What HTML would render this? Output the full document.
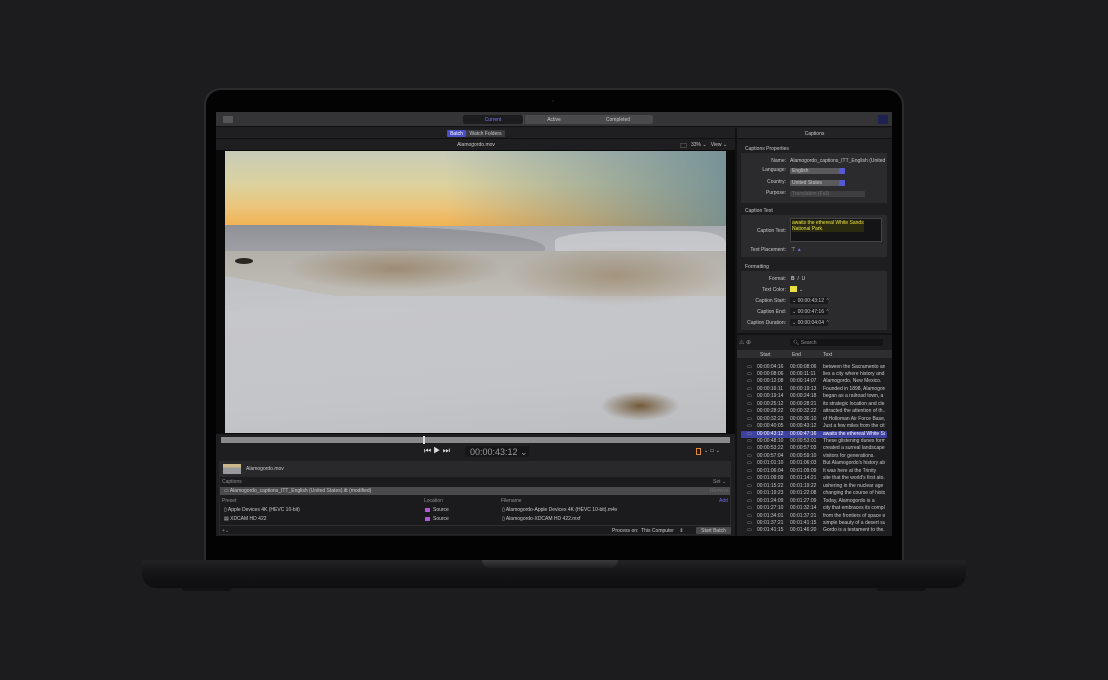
<!DOCTYPE html>
<html><head><meta charset="utf-8"><style>
*{margin:0;padding:0;box-sizing:border-box}
body{width:1108px;height:680px;background:#1c1c1e;position:relative;overflow:hidden;font-family:"Liberation Sans",sans-serif}
div{position:absolute}
.t{font-size:5px;color:#c8c8ca;white-space:nowrap;line-height:6px}
.r{text-align:right}
.g{color:#8e8e93}
</style></head><body>
<div style="left:204px;top:88px;width:700px;height:474px;border-radius:17px 17px 4px 4px;background:#2c2c2e"></div>
<div style="left:206px;top:90px;width:696px;height:472px;border-radius:15px 15px 2px 2px;background:#030303"></div>
<div style="left:552px;top:100px;width:2px;height:2px;border-radius:1px;background:#1a1a1a"></div>
<div style="left:142px;top:560px;width:824px;height:28px;border-radius:3px 3px 14px 14px;background:linear-gradient(#232325,#161618 40%,#0e0e10)"></div>
<div style="left:482px;top:560px;width:136px;height:8px;border-radius:0 0 8px 8px;background:linear-gradient(#3a3a3c,#1e1e20)"></div>
<div style="left:182px;top:587px;width:50px;height:4px;border-radius:0 0 4px 4px;background:#111"></div>
<div style="left:876px;top:587px;width:50px;height:4px;border-radius:0 0 4px 4px;background:#111"></div>

<div style="left:216px;top:112px;width:676px;height:424px;background:#1e1e20;overflow:hidden">
 <div style="left:0;top:0;width:676px;height:15px;background:#343436;border-bottom:1px solid #111"></div>
 <div style="left:7px;top:4px;width:10px;height:7px;background:#555;border-radius:1px"></div>
 <div style="left:247px;top:3px;width:190px;height:9px;background:#4a4a4c;border-radius:2px"></div>
 <div style="left:247px;top:3px;width:60px;height:9px;background:#1c1c1e;border-radius:2px"></div>
 <div class="t" style="left:247px;top:4.5px;width:60px;text-align:center;color:#7a7cf0">Current</div>
 <div style="left:308px;top:3px;width:1px;height:9px;background:#333"></div>
 <div class="t" style="left:308px;top:4.5px;width:60px;text-align:center">Active</div>
 <div class="t" style="left:370px;top:4.5px;width:64px;text-align:center">Completed</div>
 <div style="left:662px;top:3px;width:10px;height:9px;background:#1e2250;border-radius:1px"></div>
 <div style="left:0;top:16px;width:519px;height:11px;background:#1f1f21;border-bottom:1px solid #111"></div>
 <div style="left:231px;top:18px;width:19px;height:7px;background:#4a4ec8;border-radius:1px"></div>
 <div class="t" style="left:231px;top:18.5px;width:19px;text-align:center;color:#fff">Batch</div>
 <div style="left:250px;top:18px;width:39px;height:7px;background:#3a3a3c;border-radius:1px"></div>
 <div class="t" style="left:250px;top:18.5px;width:39px;text-align:center">Watch Folders</div>
 <div class="t" style="left:200px;top:30px;width:120px;text-align:center">Alamogordo.mov</div>
 <div style="left:464px;top:31px;width:7px;height:5px;border:1px solid #444"></div>
 <div class="t" style="left:475px;top:30px">33% ⌄&nbsp;&nbsp; View ⌄</div>
 <div style="left:0;top:38px;width:519px;height:284px;background:#0a0a0a"></div>
 <div style="left:9px;top:39px;width:501px;height:282px;overflow:hidden;background:linear-gradient(180deg,#c6cbb8 0%,#dcd29e 12%,#ebc47a 20%,#f2b456 26%,#f3ac48 28%,#c5c6ca 29%,#c5c6ca 100%)">
  <div style="left:220px;top:0;width:281px;height:80px;background:linear-gradient(90deg,rgba(130,155,160,0),rgba(110,140,148,.9))"></div>
  <div style="left:0;top:75px;width:501px;height:50px;background:linear-gradient(180deg,#a9abb1,#b9babf)"></div>
  <div style="left:0;top:74px;width:320px;height:38px;background:linear-gradient(180deg,#8f9197,#a4a6ac);border-radius:0 70% 0 0/0 60% 0 0"></div>
  <div style="left:330px;top:80px;width:171px;height:20px;background:linear-gradient(180deg,#c2c4c8,#c8c9cc);border-radius:40% 20% 0 0/50% 60% 0 0"></div>
  <div style="left:0;top:100px;width:501px;height:45px;background:linear-gradient(180deg,#b3b0aa,#c0bdb6)"></div>
  <div style="left:60px;top:95px;width:220px;height:45px;background:radial-gradient(ellipse,rgba(135,105,65,.55),rgba(135,105,65,0) 70%)"></div>
  <div style="left:280px;top:95px;width:221px;height:60px;background:radial-gradient(ellipse,rgba(135,105,65,.45),rgba(135,105,65,0) 70%)"></div>
  <div style="left:0;top:125px;width:260px;height:157px;background:linear-gradient(175deg,#c0c1c5,#c9cace 40%,#c3c4c8);clip-path:polygon(0 0,100% 30%,100% 100%,0 100%)"></div>
  <div style="left:0;top:160px;width:501px;height:122px;background:linear-gradient(175deg,#c6c7cb,#c4c5c9 60%,#bcbdc1)"></div>
  <div style="left:10px;top:107px;width:18px;height:6px;background:#2a2622;border-radius:50%"></div>
  <div style="left:375px;top:240px;width:80px;height:30px;background:radial-gradient(ellipse,rgba(110,85,50,.95),rgba(110,85,50,0) 70%)"></div>
 </div>
 <div style="left:5px;top:325px;width:509px;height:6px;background:#8a8a8c"></div>
 <div style="left:207px;top:324px;width:2px;height:8px;background:#ddd"></div>
 <div class="t" style="left:208px;top:336px;font-size:8px;color:#ddd">⏮ ▶ ⏭</div>
 <div style="left:249px;top:334px;width:64px;height:11px;background:#161618"></div>
 <div class="t" style="left:254px;top:335px;font-size:9px;line-height:10px;color:#9a9a9c">00:00:43:12 ⌄</div>
 <div style="left:480px;top:336px;width:5px;height:7px;border:1px solid #e08a3a"></div>
 <div class="t" style="left:488px;top:336px">⌄ ▭ ⌄</div>
 <div style="left:3px;top:349px;width:512px;height:74px;background:#1b1b1d;border:1px solid #2a2a2c"></div>
 <div style="left:4px;top:350px;width:510px;height:15px;background:#29292b"></div>
 <div style="left:7px;top:352px;width:18px;height:10px;background:linear-gradient(#c8b88a 0 35%,#9a9a9e 35%)"></div>
 <div class="t" style="left:30px;top:354px">Alamogordo.mov</div>
 <div class="t g" style="left:6px;top:367px">Captions</div>
 <div class="t g" style="left:497px;top:367px">Set ⌄</div>
 <div style="left:4px;top:375px;width:510px;height:8px;background:#4a4a4c"></div>
 <div class="t" style="left:8px;top:376px">▭ Alamogordo_captions_ITT_English (United States).itt (modified)</div>
 <div class="t" style="left:494px;top:376px;color:#6a6a6c">Remove</div>
 <div class="t g" style="left:6px;top:386px">Preset</div>
 <div class="t g" style="left:208px;top:386px">Location</div>
 <div class="t g" style="left:285px;top:386px">Filename</div>
 <div class="t" style="left:503px;top:386px;color:#6a6cf0">Add</div>
 <div class="t" style="left:8px;top:395px">▯ Apple Devices 4K (HEVC 10-bit)</div>
 <div style="left:209px;top:396px;width:5px;height:4px;background:#b05ad8"></div>
 <div class="t" style="left:217px;top:395px">Source</div>
 <div class="t" style="left:286px;top:395px">▯ Alamogordo-Apple Devices 4K (HEVC 10-bit).m4v</div>
 <div class="t" style="left:8px;top:404px">▤ XDCAM HD 422</div>
 <div style="left:209px;top:405px;width:5px;height:4px;background:#b05ad8"></div>
 <div class="t" style="left:217px;top:404px">Source</div>
 <div class="t" style="left:286px;top:404px">▯ Alamogordo-XDCAM HD 422.mxf</div>
 <div style="left:4px;top:413px;width:510px;height:1px;background:#2e2e30"></div>
 <div class="t g" style="left:6px;top:416px">+⌄</div>
 <div class="t" style="left:396px;top:416px">Process on:&nbsp; This Computer&nbsp;&nbsp;&nbsp; ⇕</div>
 <div style="left:480px;top:415px;width:35px;height:7px;background:#4a4a4c;border-radius:1px"></div>
 <div class="t" style="left:480px;top:415.5px;width:35px;text-align:center">Start Batch</div>

 <div style="left:519px;top:16px;width:2px;height:408px;background:#111"></div>
 <div style="left:521px;top:16px;width:155px;height:11px;background:#232325;border-bottom:1px solid #111"></div>
 <div class="t" style="left:521px;top:18.5px;width:155px;text-align:center">Captions</div>
 <div class="t" style="left:529px;top:34px">Captions Properties</div>
 <div style="left:525px;top:41px;width:146px;height:50px;background:#2b2b2d"></div>
 <div class="t r" style="left:520px;top:45.5px;width:50px">Name:</div>
 <div class="t" style="left:574px;top:45.5px">Alamogordo_captions_ITT_English (United</div>
 <div class="t r" style="left:520px;top:55px;width:50px">Language:</div>
 <div style="left:574px;top:56px;width:55px;height:6px;background:#5a5a5c;border-radius:1px"></div>
 <div style="left:623px;top:56px;width:6px;height:6px;background:#5558d8;border-radius:1px"></div>
 <div class="t" style="left:576px;top:56px">English</div>
 <div class="t r" style="left:520px;top:66.5px;width:50px">Country:</div>
 <div style="left:574px;top:67.5px;width:55px;height:6px;background:#5a5a5c;border-radius:1px"></div>
 <div style="left:623px;top:67.5px;width:6px;height:6px;background:#5558d8;border-radius:1px"></div>
 <div class="t" style="left:576px;top:67.5px">United States</div>
 <div class="t r" style="left:520px;top:77.5px;width:50px">Purpose:</div>
 <div style="left:574px;top:78.5px;width:75px;height:6px;background:#3e3e40;border-radius:1px"></div>
 <div class="t" style="left:576px;top:78.5px;color:#6a6a6c">Translation (Full)</div>
 <div class="t" style="left:529px;top:96px">Caption Text</div>
 <div style="left:525px;top:103px;width:146px;height:42px;background:#2b2b2d"></div>
 <div style="left:574px;top:106px;width:92px;height:24px;background:#141416;border:1px solid #444"></div>
 <div class="t" style="left:576px;top:108px;color:#e8e040;line-height:6px;background:#2a2a10">awaits the ethereal White Sands<br>National Park.</div>
 <div class="t r" style="left:520px;top:116px;width:50px">Caption Text:</div>
 <div class="t r" style="left:520px;top:134.5px;width:50px">Text Placement:</div>
 <div class="t" style="left:575px;top:134.5px">⊤ <span style="color:#6a6cf0">▲</span></div>
 <div class="t" style="left:529px;top:152px">Formatting</div>
 <div style="left:525px;top:159px;width:146px;height:59px;background:#2b2b2d"></div>
 <div class="t r" style="left:520px;top:163.5px;width:50px">Format:</div>
 <div class="t" style="left:575px;top:163.5px"><b>B</b>&nbsp; <i>I</i>&nbsp; U</div>
 <div class="t r" style="left:520px;top:174.5px;width:50px">Text Color:</div>
 <div style="left:574px;top:173.5px;width:7px;height:6px;background:#e8e040"></div>
 <div class="t" style="left:583px;top:174.5px">⌄</div>
 <div class="t r" style="left:520px;top:185.5px;width:50px">Caption Start:</div>
 <div style="left:574px;top:184.5px;width:38px;height:7px;background:#1a1a1c;border-radius:1px"></div>
 <div class="t" style="left:576px;top:185.5px">⌄ 00:00:43:12 ⌃</div>
 <div class="t r" style="left:520px;top:196.5px;width:50px">Caption End:</div>
 <div style="left:574px;top:195.5px;width:38px;height:7px;background:#1a1a1c;border-radius:1px"></div>
 <div class="t" style="left:576px;top:196.5px">⌄ 00:00:47:16 ⌃</div>
 <div class="t r" style="left:520px;top:207.5px;width:50px">Caption Duration:</div>
 <div style="left:574px;top:206.5px;width:38px;height:7px;background:#1a1a1c;border-radius:1px"></div>
 <div class="t" style="left:576px;top:207.5px">⌄ 00:00:04:04 ⌃</div>
 <div style="left:521px;top:221px;width:155px;height:2px;background:#111"></div>
 <div class="t g" style="left:523px;top:228px;font-size:6px">⚠ ⊕</div>
 <div style="left:574px;top:227px;width:93px;height:7px;background:#141416;border-radius:1px"></div>
 <div class="t g" style="left:577px;top:228px">🔍︎ Search</div>
 <div style="left:521px;top:238px;width:155px;height:8px;background:#2e2e30"></div>
 <div class="t" style="left:544px;top:239.5px">Start</div>
 <div class="t" style="left:576px;top:239.5px">End</div>
 <div class="t" style="left:607px;top:239.5px">Text</div>
 <div style="left:525px;top:318.5px;width:146px;height:7px;background:#3d42a0;border-radius:1px"></div>
</div>
<div style="left:0;top:0" id="list"></div>
<script>
var d=[["00:00:04:16","00:00:08:06","between the Sacramento an..."],["00:00:08:06","00:00:11:11","lies a city where history and..."],["00:00:12:08","00:00:14:07","Alamogordo, New Mexico."],["00:00:16:11","00:00:19:13","Founded in 1898, Alamogordo"],["00:00:19:14","00:00:24:18","began as a railroad town, a v..."],["00:00:25:12","00:00:28:21","its strategic location and cle..."],["00:00:28:22","00:00:32:22","attracted the attention of th..."],["00:00:32:23","00:00:36:10","of Holloman Air Force Base,..."],["00:00:40:05","00:00:43:12","Just a few miles from the cit..."],["00:00:43:12","00:00:47:16","awaits the ethereal White Sa..."],["00:00:48:10","00:00:53:01","These glistening dunes form..."],["00:00:53:22","00:00:57:03","created a surreal landscape..."],["00:00:57:04","00:00:59:10","visitors for generations."],["00:01:01:10","00:01:06:03","But Alamogordo's history als..."],["00:01:06:04","00:01:09:09","It was here at the Trinity"],["00:01:09:09","00:01:14:21","site that the world's first ato..."],["00:01:15:22","00:01:19:22","ushering in the nuclear age a..."],["00:01:19:23","00:01:22:08","changing the course of histo..."],["00:01:24:09","00:01:27:09","Today, Alamogordo is a"],["00:01:27:10","00:01:32:14","city that embraces its compl..."],["00:01:34:01","00:01:37:21","from the frontiers of space e..."],["00:01:37:21","00:01:41:15","simple beauty of a desert su..."],["00:01:41:15","00:01:46:20","Gordo is a testament to the..."]];
var h="";for(var i=0;i<d.length;i++){var y=363.5+i*7.45;var c=i==9?"#fff":"#c8c8ca";
h+='<div class="t" style="left:747px;top:'+y+'px;color:#aaa">▭</div><div class="t" style="left:757px;top:'+y+'px;color:'+c+'">'+d[i][0]+'</div><div class="t" style="left:790px;top:'+y+'px;color:'+c+'">'+d[i][1]+'</div><div class="t" style="left:823px;top:'+y+'px;color:'+c+';width:62px;overflow:hidden">'+d[i][2]+'</div>';}
document.getElementById("list").innerHTML=h;
</script>
</body></html>
